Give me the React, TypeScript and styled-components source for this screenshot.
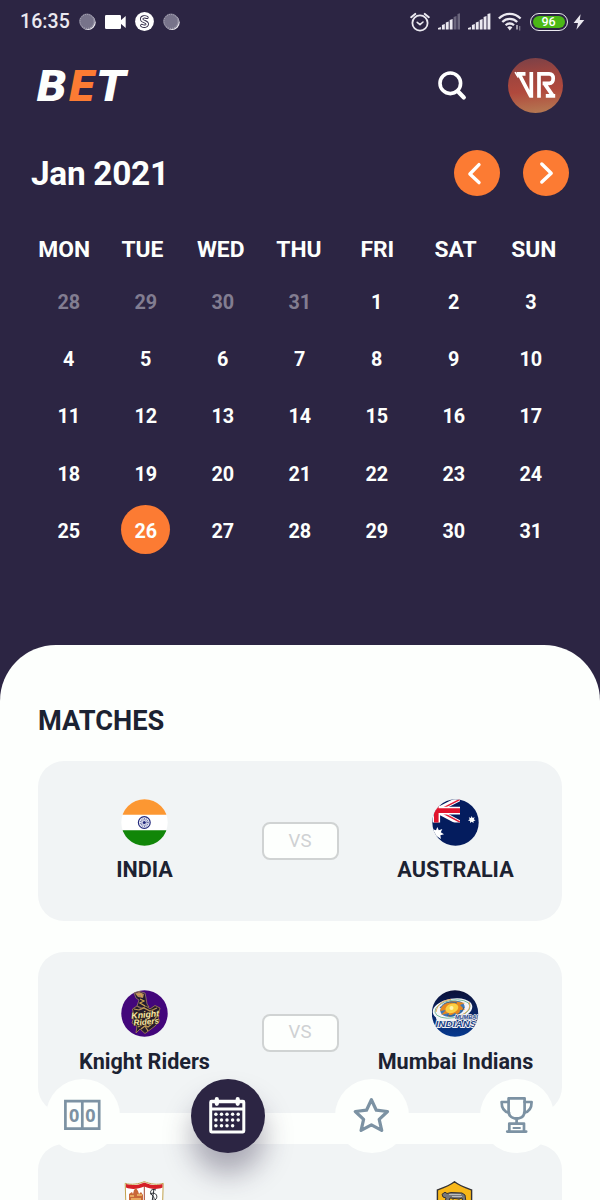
import React from 'react';
import styled, { createGlobalStyle } from 'styled-components';

const NIGHT = '#2c2543';
const ORANGE = '#fc7b33';
const PAPER = '#fdfffd';
const CARD = '#f1f4f5';
const INK = '#1c2232';
const SLATE = '#7c92a3';

const GlobalStyle = createGlobalStyle`
  * { box-sizing: border-box; }
  body { margin: 0; background: ${NIGHT}; font-family: Roboto, "Liberation Sans", sans-serif; }
  button { font: inherit; border: 0; padding: 0; background: none; cursor: pointer; }
  svg { display: block; }
`;

const Screen = styled.div`
  position: relative;
  display: flex;
  flex-direction: column;
  width: 600px;
  height: 1200px;
  overflow: hidden;
  background: ${NIGHT};
`;

const Header = styled.header`
  flex: 0 0 645px;
  color: ${PAPER};
`;

const StatusBar = styled.div`
  display: flex;
  align-items: center;
  justify-content: space-between;
  height: 42px;
  padding: 1px 15px 0 20px;
`;

const StatusGroup = styled.div<{ $gap: number }>`
  display: flex;
  align-items: center;
  gap: ${(p) => p.$gap}px;
`;

const Clock = styled.span`
  width: 50px;
  font-size: 19.5px;
  font-weight: 500;
  line-height: 24px;
  letter-spacing: 0.1px;
  color: #ebe9f0;
`;

const TopBar = styled.div`
  display: flex;
  align-items: center;
  height: 87px;
  padding: 0 37px 0 36px;
`;

const Logo = styled.div`
  flex: 1;
  padding-top: 3px;
  font-family: "DejaVu Sans", "Noto Sans", sans-serif;
  font-size: 42px;
  font-weight: 700;
  font-style: oblique;
  line-height: 50px;
  letter-spacing: 0.2px;
  color: ${PAPER};

  span { color: ${ORANGE}; }
`;

const IconButton = styled.button`
  margin-right: 41px;
`;

const MonthBar = styled.div`
  display: flex;
  align-items: center;
  gap: 23px;
  height: 46px;
  margin-top: 21px;
  padding: 0 31px;
`;

const Month = styled.h1`
  flex: 1;
  margin: 0;
  font-size: 33.4px;
  font-weight: 700;
  line-height: 47px;
  letter-spacing: -0.3px;
`;

const RoundButton = styled.button`
  display: flex;
  align-items: center;
  justify-content: center;
  width: 46px;
  height: 46px;
  border-radius: 50%;
  background: ${ORANGE};
`;

const Weekdays = styled.div`
  display: grid;
  grid-template-columns: repeat(7, 1fr);
  margin: 40px 27px 0 25px;
  font-size: 22.8px;
  font-weight: 700;
  line-height: 28px;
  text-align: center;
`;

const Dates = styled.div`
  display: grid;
  grid-template-columns: repeat(7, 1fr);
  grid-auto-rows: 57.2px;
  margin: 9.9px 30.7px 0 30.3px;
`;

const DateCell = styled.div<{ $muted?: boolean; $selected?: boolean }>`
  position: relative;
  isolation: isolate;
  display: flex;
  align-items: center;
  justify-content: center;
  font-size: 19.8px;
  font-weight: 700;
  color: ${(p) => (p.$muted ? '#827d91' : PAPER)};

  &::before {
    content: '';
    display: ${(p) => (p.$selected ? 'block' : 'none')};
    position: absolute;
    z-index: -1;
    top: 1.9px;
    left: 14.2px;
    width: 49px;
    height: 49px;
    border-radius: 50%;
    background: ${ORANGE};
  }
`;

const Sheet = styled.main`
  flex: 1;
  min-height: 0;
  padding: 61px 38px 0;
  border-radius: 56px 56px 0 0;
  background: ${PAPER};
  color: ${INK};
`;

const SheetTitle = styled.h2`
  margin: 0 0 25px;
  font-size: 27.2px;
  font-weight: 700;
  line-height: 30px;
`;

const MatchList = styled.div`
  display: flex;
  flex-direction: column;
  gap: 31.1px;
`;

const MatchCard = styled.article`
  display: flex;
  align-items: flex-start;
  justify-content: space-between;
  height: 160.3px;
  border-radius: 26px;
  background: ${CARD};
`;

const Team = styled.div`
  display: flex;
  flex-direction: column;
  align-items: center;
  gap: 10.8px;
  width: 213px;
  padding-top: 37.7px;
`;

const TeamName = styled.span`
  font-size: 21.6px;
  font-weight: 700;
  line-height: 28px;
  white-space: nowrap;
`;

const Versus = styled.div`
  display: flex;
  align-items: center;
  justify-content: center;
  align-self: center;
  width: 77px;
  height: 38px;
  padding-bottom: 1px;
  border: 2px solid #d0d3d3;
  border-radius: 8px;
  background: ${PAPER};
  color: #cfd1d3;
  font-size: 18.6px;
`;

const Nav = styled.nav`
  position: absolute;
  left: 46px;
  right: 46px;
  bottom: 47px;
  display: flex;
  justify-content: space-between;
`;

const NavItem = styled.button<{ $active?: boolean }>`
  display: flex;
  align-items: center;
  justify-content: center;
  width: 74px;
  height: 74px;
  border-radius: 50%;
  background: ${(p) => (p.$active ? NIGHT : PAPER)};
  color: ${(p) => (p.$active ? PAPER : SLATE)};
  box-shadow: ${(p) => (p.$active ? '0 21px 28px rgba(44, 37, 67, 0.36)' : 'none')};
`;

const CoinIcon = () => (
  <svg width="17" height="18" viewBox="0 0 17 18">
    <circle cx="9" cy="9.4" r="7.7" fill="#eceaf0" />
    <circle cx="8" cy="8.4" r="7.8" fill="#77738a" />
    <circle cx="8" cy="8.4" r="7" fill="none" stroke="#b5b2c0" strokeWidth="1" strokeDasharray="1 1.2" />
  </svg>
);

const VideoIcon = () => (
  <svg width="21" height="14" viewBox="0 0 21 14" fill="#fff">
    <rect width="16" height="14" rx="1.2" />
    <path d="M15 6 20.7 1V13L15 8Z" />
  </svg>
);

const ShazamIcon = () => (
  <svg width="19" height="19" viewBox="0 0 19 19">
    <circle cx="9.5" cy="9.5" r="9.4" fill="#fff" />
    <path
      d="M12 5.4C9.8 4.3 6.7 4.8 6.6 7 6.6 8.6 8.4 9.2 9.5 9.6c1.4.5 2.9 1 2.8 2.6-.2 2.2-3.3 2.6-5.5 1.3"
      fill="none" stroke={NIGHT} strokeWidth="3.3" strokeLinecap="round"
    />
    <path
      d="M12 5.4C9.8 4.3 6.7 4.8 6.6 7 6.6 8.6 8.4 9.2 9.5 9.6c1.4.5 2.9 1 2.8 2.6-.2 2.2-3.3 2.6-5.5 1.3"
      fill="none" stroke="#fff" strokeWidth="1.6" strokeLinecap="round"
    />
  </svg>
);

const AlarmIcon = () => (
  <svg width="20" height="20" viewBox="0 0 20 20" fill="none" stroke="#ebe9f0" strokeLinecap="round">
    <circle cx="10" cy="11" r="7.6" strokeWidth="1.8" />
    <path d="M7.2 10.3 10 12.6 13 10" strokeWidth="1.6" strokeLinejoin="round" />
    <path d="M1.2 5.2 5.2 1.9M14.8 1.9 18.8 5.2" strokeWidth="2" />
  </svg>
);

const SignalIcon = ({ level }: { level: number }) => (
  <svg width="22.6" height="17" viewBox="0 0 22.6 17">
    {[2, 5, 7.5, 10, 13, 16].map((h, i) => (
      <path
        key={h}
        d={`M${i * 3.9} 16.6V${17 - h}l2.9 ${i < 5 ? -1 : -0.8}V16.6Z`}
        fill={i < level ? '#ebe9f0' : '#6b667d'}
      />
    ))}
  </svg>
);

const WifiIcon = () => (
  <svg width="24" height="19" viewBox="0 0 24 19" fill="none" stroke="#ebe9f0" strokeWidth="2.3">
    <path d="M.9 6.5C7.2.3 16.3.3 22.6 6.5" />
    <path d="M4.3 10c4.2-4.1 10.7-4.1 14.9 0" />
    <path d="M7.6 13.3c2.4-2.4 6-2.4 8.4 0" />
    <path d="M9.2 15.2 11.8 18.4l2.6-3.2c-1.5-1.2-3.7-1.2-5.2 0Z" fill="#ebe9f0" stroke="none" />
    <path d="M19 13v4.4" strokeWidth="1.2" />
    <path d="M21.7 14v4.4" strokeWidth="1.2" opacity="0.45" />
  </svg>
);

const BatteryShell = styled.div`
  display: flex;
  width: 38px;
  height: 18px;
  margin-right: -2px;
  padding: 2px;
  border: 1.5px solid #ebe9f0;
  border-radius: 9px;
`;

const BatteryFill = styled.div`
  flex: 1;
  border-radius: 6px;
  background: #4bb816;
  color: #fff;
  font-size: 12.5px;
  font-weight: 500;
  line-height: 12px;
  text-align: center;
`;

const BoltIcon = () => (
  <svg width="12" height="16" viewBox="0 0 12 16">
    <path d="M7.6.3.6 9H5L3.4 15.7 11.3 6H6.8Z" fill="#ebe9f0" />
  </svg>
);

const SearchIcon = () => (
  <svg width="30" height="30" viewBox="0 0 30 30" fill="none" stroke="#fff" strokeLinecap="round">
    <circle cx="13.3" cy="12.3" r="10.3" strokeWidth="3.6" />
    <path d="M20.8 20.2 26.8 26.5" strokeWidth="4.2" />
  </svg>
);

const Avatar = () => (
  <svg width="55" height="55" viewBox="0 0 55 55">
    <defs>
      <linearGradient id="avatarFill" x1="0.4" y1="0" x2="0.5" y2="1">
        <stop offset="0" stopColor="#7d4147" />
        <stop offset="0.3" stopColor="#9f453e" />
        <stop offset="0.6" stopColor="#b0493d" />
        <stop offset="1" stopColor="#b57852" />
      </linearGradient>
    </defs>
    <circle cx="27.5" cy="27.5" r="27.5" fill="url(#avatarFill)" />
    <g fill="none" stroke="#fff" strokeWidth="3.7">
      <path d="M8.6 15.9H17.5M10.6 15.2 22.8 38.5M23.3 14V39.8" />
      <path d="M31 14V39.8M30 15.9H41.2c2.6 0 4 1.8 4 4.7s-1.4 4.7-4 4.7H34.6M37 26.4 44.8 37.6M37.8 37.9H47.2" />
      <path d="M7 14.1 10.4 19.5" strokeWidth="1.5" />
    </g>
  </svg>
);

const Chevron = ({ back }: { back?: boolean }) => (
  <svg width="20" height="26" viewBox="0 0 20 26" fill="none" stroke="#fff" strokeWidth="3.4" strokeLinecap="round" strokeLinejoin="round">
    <path d={back ? 'M12 4.6 2.9 14 12 22.6' : 'M5.8 4 15.2 13.2 5.8 22'} />
  </svg>
);

const IndiaFlag = () => (
  <svg width="47" height="47" viewBox="0 0 47 47">
    <clipPath id="clipIndia"><circle cx="23.5" cy="23.5" r="23.2" /></clipPath>
    <g clipPath="url(#clipIndia)">
      <path fill="#fff" d="M0 0H47V47H0z" />
      <path fill="#fc9732" d="M0 0H47V15.7H0z" />
      <path fill="#118608" d="M0 31.3H47V47H0z" />
    </g>
    <circle cx="23.3" cy="23.5" r="5.9" fill="#f5f6fb" stroke="#22287c" strokeWidth="1.2" />
    <circle cx="23.3" cy="23.5" r="3.3" fill="none" stroke="#6f74ad" strokeWidth="2.4" strokeDasharray="0.8 0.7" />
    <circle cx="23.3" cy="23.5" r="1.6" fill="#22287c" />
  </svg>
);

const AustraliaFlag = () => (
  <svg width="47" height="47" viewBox="0 0 47 47">
    <clipPath id="clipAus"><circle cx="23.5" cy="23.5" r="23.2" /></clipPath>
    <clipPath id="clipJack"><path d="M0 0H28V23.5H0z" /></clipPath>
    <g clipPath="url(#clipAus)">
      <path fill="#041c5e" d="M0 0H47V47H0z" />
      <g clipPath="url(#clipJack)">
        <path d="M4.5 11.5 28-.5M4.5 11.5 28 24" stroke="#fff" strokeWidth="5" />
        <path d="M9 10.2 28 .4M9 13 28 23" stroke="#e0213a" strokeWidth="1.5" />
        <path d="M0 11.6H28M4.3 0V24" stroke="#fff" strokeWidth="7.6" />
        <path d="M0 11.6H28M4.3 0V24" stroke="#e0142d" strokeWidth="4.6" />
      </g>
      <path fill="#fff" d="M5.3 28 6.8 31.3 10.3 30.1 8.8 33.3 12 35.2 8.4 36.3 8.9 40 5.3 37.6 2 40 2.6 36.3 0 34 2 33 0 30 4 31.2Z" />
      <path fill="#fff" d="M39.7 17 40.6 19 42.7 18.3 41.8 20.2 43.5 21.5 41.5 22 41.5 24 39.7 22.8 38 24 38.1 22 36 21.5 37.7 20.2 36.8 18.3 38.9 19Z" />
    </g>
  </svg>
);

const CrestText = styled.text`
  font-family: "Liberation Sans", sans-serif;
  font-weight: 700;
  font-style: italic;
  text-anchor: middle;
  paint-order: stroke;
`;

const KnightRidersCrest = () => (
  <svg width="47" height="47" viewBox="0 0 47 47">
    <circle cx="23.5" cy="23.5" r="23.2" fill="#43067b" />
    <path d="M13 2.8 18 1.4 24 3 25 8 26 14 28 17 21 18 16 16 18 10 15 8Z" fill="#211a31" stroke="#a98a65" strokeWidth="0.7" />
    <path d="M14 3.5 18 2 23 4 22 8 17 7Z" fill="#b58763" />
    <path d="M19 9 23 11 19 13 24 16M16 5 20 4 21 7" fill="none" stroke="#d1a64d" strokeWidth="1.2" />
    <path d="M11.5 19 16 16 20 19 25 16 29 19 34 15.5 39 18 37 27 38.5 31 34 36 30 39 24 43.5 19 39 15 43 16 36 11 33 13 27Z" fill="#251c2c" stroke="#aa8550" strokeWidth="0.8" />
    <path d="M13 19 18 20 23 18 29 21 36 18M17 37 22 34 27 37 32 33M20 39 24 36 27 41M34 22 36 26 33 30" fill="none" stroke="#c09a55" strokeWidth="1.2" />
    <g transform="rotate(-5 24 28)" fill="#f8e8a8" stroke="#3a2818" strokeWidth="1">
      <CrestText x="24.5" y="27.6" fontSize="8.8">Knight</CrestText>
      <CrestText x="25" y="34.6" fontSize="8.2">Riders</CrestText>
    </g>
  </svg>
);

const MumbaiCrest = () => (
  <svg width="47" height="47" viewBox="0 0 47 47">
    <defs>
      <linearGradient id="mumbaiFill" x1="0" y1="0" x2="0" y2="1">
        <stop offset="0" stopColor="#0b1038" />
        <stop offset="1" stopColor="#07398f" />
      </linearGradient>
      <clipPath id="clipMumbai"><circle cx="23" cy="23.5" r="23.2" /></clipPath>
    </defs>
    <g clipPath="url(#clipMumbai)">
      <path fill="url(#mumbaiFill)" d="M0 0H47V47H0z" />
      <ellipse cx="20.5" cy="19.3" rx="20" ry="10.6" fill="#f4f5f8" transform="rotate(-10 20.5 19.3)" />
      <path d="M3 25H24V31H5Z" fill="#f4f5f8" />
      <ellipse cx="20.5" cy="19" rx="17.8" ry="8.8" fill="none" stroke="#73b897" strokeWidth="0.9" transform="rotate(-10 20.5 19)" />
      <path d="M4 22C5 14 12 10 19 9.5M37 12C40 18 34 24 27 26" fill="none" stroke="#e9a04a" strokeWidth="0.9" />
      <ellipse cx="20.5" cy="18.8" rx="12.4" ry="7.8" fill="#3f78b4" transform="rotate(-14 20.5 18.8)" />
      <path d="M8 21C10 13 18 9.5 27 12L33 13 28 15 33 20 28 20 27 25.5 23 23 16 27 17 23 9 25 14 20Z" fill="#e58720" />
      <ellipse cx="19.8" cy="18.3" rx="6.6" ry="4.6" fill="#fbd044" transform="rotate(-18 20 18)" />
      <path d="M8 18C12 12 18 11 25 13M15 25C23 28 31 22 32 17" fill="none" stroke="#2c5f96" strokeWidth="1" />
      <circle cx="19.5" cy="18" r="2" fill="#fff4b0" />
      <g fill="#1a4288" stroke="#f6f3f3" strokeLinejoin="round">
        <CrestText x="34.4" y="29.2" fontSize="5.8" strokeWidth="1.4" textLength="23" lengthAdjust="spacingAndGlyphs">MUMBAI</CrestText>
        <CrestText x="24" y="37.4" fontSize="9.8" strokeWidth="1.8" textLength="41" lengthAdjust="spacingAndGlyphs">INDIANS</CrestText>
      </g>
    </g>
  </svg>
);

const SevillaCrest = () => (
  <svg width="47" height="47" viewBox="0 0 47 47">
    <path d="M4.2 2.3C10 4.3 18 3 23.3.6 29 3 37 4.3 42.2 2.3L41.5 27C40 36 31 41 23.3 45 16 41 6 36 5 27Z" fill="#fff" stroke="#c2a24d" strokeWidth="1" />
    <path d="M5 3C11 5 18 4 23.3 1.4 29 4 36 5 41.5 3V6.5C36 9 29 8 23.3 5.6 17 8 11 9 5 6.5Z" fill="#d61f26" />
    <path d="M23.3 5V22M5 22H42" stroke="#a6452d" strokeWidth="1" />
    <path d="M8 22V13L11 11 12 13 13 9 15 7 17 10 18 13 20 11 22 14V22Z" fill="#c96838" />
    <path d="M9 15H13M16 14H21M10 18H20" stroke="#f1bd69" strokeWidth="1.4" />
    <path d="M35 9C30 7 28 11 31 14S34 20 30 20M33 8 31 21M29 13C35 10 38 16 34 19" fill="none" stroke="#292c32" strokeWidth="1" />
  </svg>
);

const RomaCrest = () => (
  <svg width="47" height="47" viewBox="0 0 47 47">
    <path d="M22.5.8C17 5 11 7 5.4 9V28C8 36 17 41 22.5 45 29 41 37 36 39.6 28V9C34 7 28 5 22.5.8Z" fill="#f8b719" stroke="#353232" strokeWidth="1.4" />
    <path d="M10 13.3 13 11.2 15 12.5 19 11.5 30 12 33 14 34 21 31 21 30 17 27 18 18 17 16 22 13 21 14 17 11 16Z" fill="#77777a" stroke="#353232" strokeWidth="1" />
    <path d="M17 13.5H29M20 15.5H30" stroke="#bdbdbd" strokeWidth="1" />
    <path d="M19 22 21 19 23 22 27 19 29 22" stroke="#504b44" strokeWidth="1.5" fill="none" />
  </svg>
);

const ScoreboardIcon = () => (
  <svg width="38" height="34" viewBox="0 0 38 34">
    <path d="M1.4 2.1H35.2V29.6H1.4ZM18.3 2V30" fill="none" stroke={SLATE} strokeWidth="2.7" />
    <g fill={SLATE} fontFamily="Open Sans" fontWeight="700" fontSize="18" textAnchor="middle">
      <text x="10.1" y="22.7">0</text>
      <text x="26.3" y="22.7">0</text>
    </g>
  </svg>
);

const CalendarIcon = () => (
  <svg width="38" height="38" viewBox="0 0 38 38">
    <path
      fillRule="evenodd"
      fill="currentColor"
      d="M2.5 2.8H34Q36.3 2.8 36.3 5.2V34Q36.3 36.4 34 36.4H2.5Q.2 36.4 .2 34V5.2Q.2 2.8 2.5 2.8ZM3.2 6.2V10.6H33.3V6.2ZM3.2 13.6V33.4H33.3V13.6Z"
    />
    <path d="M7.8 2.2V6.8M28.7 2.2V6.8" stroke="currentColor" strokeWidth="4.2" strokeLinecap="round" />
    {[17.3, 23, 28.8].map((y, row) =>
      [6.9, 12.5, 18, 23.6, 29.2].slice(0, row === 2 ? 4 : 5).map((x) => (
        <circle key={`${x}-${y}`} cx={x} cy={y} r="1.75" fill="currentColor" />
      )),
    )}
  </svg>
);

const StarIcon = () => (
  <svg width="38" height="36" viewBox="0 0 38 36">
    <path
      d="M18 2.3 22.9 12.8 34.1 14.1 25.8 21.9 28.3 33 18 27.4 7.7 33 10.2 21.9 1.9 14.1 13.1 12.8Z"
      fill="none" stroke="currentColor" strokeWidth="3.2" strokeLinejoin="round" transform="translate(0.4 -0.6)"
    />
  </svg>
);

const TrophyIcon = () => (
  <svg width="34" height="38" viewBox="0 0 34 38" fill="none" stroke="currentColor" strokeWidth="2.7" strokeLinejoin="round" strokeLinecap="round">
    <path d="M8.6 1.3H24.6V14C24.6 18.4 22 20.6 19 21.3H14.2C11.2 20.6 8.6 18.4 8.6 14Z" />
    <path d="M8.6 5H1.6C1.6 10.8 3.4 14.6 9 15.8M24.6 5H31.6C31.6 10.8 29.8 14.6 24.2 15.8" />
    <path d="M16.6 22V26M9.3 34V26.6H24V34M7.2 34.6H26.2" />
    <path d="M13.4 31H20" strokeWidth="1.8" />
  </svg>
);

const WEEKDAYS = ['MON', 'TUE', 'WED', 'THU', 'FRI', 'SAT', 'SUN'];
const PREVIOUS_MONTH = [28, 29, 30, 31];
const DAYS = Array.from({ length: 31 }, (_, i) => i + 1);
const SELECTED_DAY = 26;

type Match = {
  id: string;
  home?: string;
  away?: string;
  homeCrest: React.ReactNode;
  awayCrest: React.ReactNode;
};

const MATCHES: Match[] = [
  { id: 'm1', home: 'INDIA', away: 'AUSTRALIA', homeCrest: <IndiaFlag />, awayCrest: <AustraliaFlag /> },
  { id: 'm2', home: 'Knight Riders', away: 'Mumbai Indians', homeCrest: <KnightRidersCrest />, awayCrest: <MumbaiCrest /> },
  { id: 'm3', homeCrest: <SevillaCrest />, awayCrest: <RomaCrest /> },
];

export default function App() {
  return (
    <>
      <GlobalStyle />
      <Screen>
        <Header>
          <StatusBar>
            <StatusGroup $gap={9}>
              <Clock>16:35</Clock>
              <CoinIcon />
              <VideoIcon />
              <ShazamIcon />
              <CoinIcon />
            </StatusGroup>
            <StatusGroup $gap={7.5}>
              <AlarmIcon />
              <SignalIcon level={4} />
              <SignalIcon level={6} />
              <WifiIcon />
              <BatteryShell><BatteryFill>96</BatteryFill></BatteryShell>
              <BoltIcon />
            </StatusGroup>
          </StatusBar>
          <TopBar>
            <Logo>B<span>E</span>T</Logo>
            <IconButton aria-label="Search"><SearchIcon /></IconButton>
            <Avatar />
          </TopBar>
          <MonthBar>
            <Month>Jan 2021</Month>
            <RoundButton aria-label="Previous month"><Chevron back /></RoundButton>
            <RoundButton aria-label="Next month"><Chevron /></RoundButton>
          </MonthBar>
          <Weekdays>
            {WEEKDAYS.map((day) => <span key={day}>{day}</span>)}
          </Weekdays>
          <Dates>
            {PREVIOUS_MONTH.map((day) => <DateCell key={`prev-${day}`} $muted>{day}</DateCell>)}
            {DAYS.map((day) => <DateCell key={day} $selected={day === SELECTED_DAY}>{day}</DateCell>)}
          </Dates>
        </Header>
        <Sheet>
          <SheetTitle>MATCHES</SheetTitle>
          <MatchList>
            {MATCHES.map((match) => (
              <MatchCard key={match.id}>
                <Team>{match.homeCrest}{match.home && <TeamName>{match.home}</TeamName>}</Team>
                {match.home && <Versus>VS</Versus>}
                <Team>{match.awayCrest}{match.away && <TeamName>{match.away}</TeamName>}</Team>
              </MatchCard>
            ))}
          </MatchList>
        </Sheet>
        <Nav>
          <NavItem aria-label="Scores"><ScoreboardIcon /></NavItem>
          <NavItem aria-label="Calendar" $active><CalendarIcon /></NavItem>
          <NavItem aria-label="Favourites"><StarIcon /></NavItem>
          <NavItem aria-label="Trophies"><TrophyIcon /></NavItem>
        </Nav>
      </Screen>
    </>
  );
}
